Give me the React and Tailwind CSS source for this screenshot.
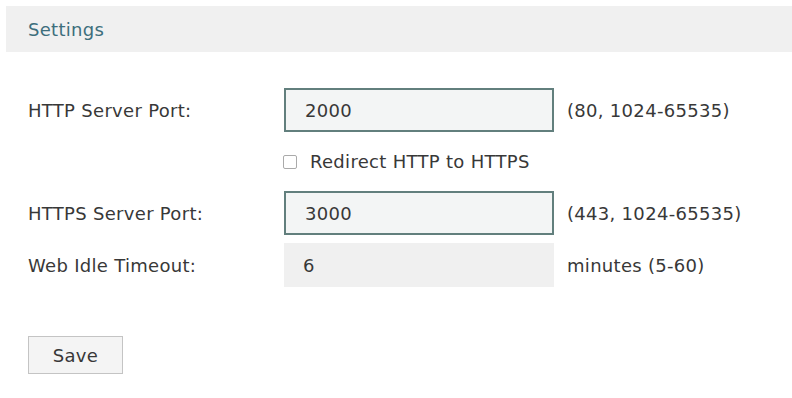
import React, { useState } from 'react';

const Field = ({ label, value, hint, bordered = true }) => (
  <div className="flex items-center">
    <div className="w-[256px] text-[18px] text-[#383838]">{label}</div>
    <input
      type="text"
      defaultValue={value}
      className={`w-[270px] h-[44px] px-[19px] text-[18px] text-[#383838] outline-none ${
        bordered ? 'border-2 border-[#627f7d] bg-[#f3f5f5]' : 'border-0 bg-[#f0f0f0]'
      }`}
    />
    <div className="ml-[13px] text-[18px] text-[#383838]">{hint}</div>
  </div>
);

export default function App() {
  const [redirect, setRedirect] = useState(false);

  return (
    <div className="w-[792px] h-[398px] bg-white pt-[6px] tracking-[0.3px] font-['DejaVu_Sans',sans-serif]">
      {/* Section header */}
      <div className="ml-[6px] h-[46px] bg-[#f0f0f0] flex items-center pl-[22px]">
        <span className="text-[18px] text-[#3d6e7c]">Settings</span>
      </div>

      <div className="pl-[28px] pt-[36px]">
        <Field label="HTTP Server Port:" value="2000" hint="(80, 1024-65535)" />

        {/* Redirect checkbox */}
        <div className="flex items-center h-[59px] pl-[255px]">
          <input
            type="checkbox"
            checked={redirect}
            onChange={(e) => setRedirect(e.target.checked)}
            className="appearance-none w-[14px] h-[14px] border border-[#aaa] bg-white rounded-[2px] checked:bg-[#627f7d]"
          />
          <span className="ml-[13px] text-[18px] text-[#383838]">Redirect HTTP to HTTPS</span>
        </div>

        <div className="flex flex-col gap-[8px]">
          <Field label="HTTPS Server Port:" value="3000" hint="(443, 1024-65535)" />
          <Field label="Web Idle Timeout:" value="6" hint="minutes (5-60)" bordered={false} />
        </div>

        <button className="mt-[49px] w-[95px] h-[38px] border border-[#c4c4c4] bg-[#f4f4f4] text-[18px] text-[#383838]">
          Save
        </button>
      </div>
    </div>
  );
}
